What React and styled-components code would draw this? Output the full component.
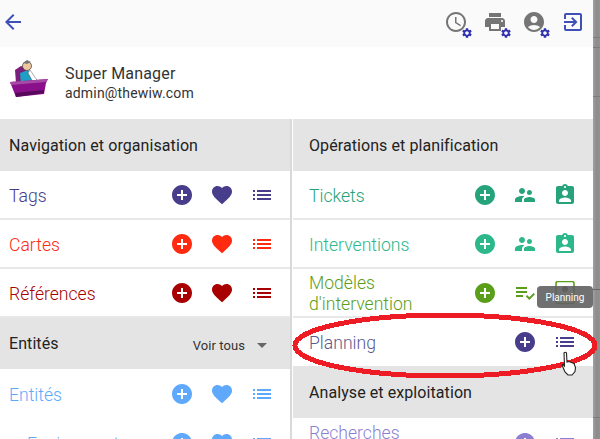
import React from 'react';
import styled, { createGlobalStyle } from 'styled-components';
import {
  MdArrowBack,
  MdAccessTime,
  MdPrint,
  MdAccountCircle,
  MdExitToApp,
  MdSettings,
  MdAddCircle,
  MdFavorite,
  MdList,
  MdSupervisorAccount,
  MdAssignmentInd,
  MdPlaylistAddCheck,
  MdArrowDropDown,
} from 'react-icons/md';

const GlobalStyle = createGlobalStyle`
  html, body {
    margin: 0;
    padding: 0;
    width: 600px;
    height: 439px;
    overflow: hidden;
    background: #fff;
  }
`;

const Page = styled.div`
  position: relative;
  width: 600px;
  height: 439px;
  overflow: hidden;
  background: #fff;
  font-family: Roboto, 'Liberation Sans', sans-serif;
`;

const TopBar = styled.div`
  box-sizing: border-box;
  height: 47px;
  background: #fafafa;
  display: flex;
  align-items: center;
  justify-content: space-between;
  padding: 0 15px 3px 1px;
  color: #3f4fb8;
`;

const TopActions = styled.div`
  display: flex;
  align-items: center;
  gap: 15px;
`;

const GearIcon = styled.span`
  position: relative;
  display: block;
  width: 24px;
  height: 24px;
  color: #757575;

  & > svg:last-child {
    position: absolute;
    right: -5px;
    bottom: -5px;
    color: #2f2fb0;
  }
`;

const User = styled.div`
  height: 72px;
  display: flex;
  align-items: center;
  gap: 15px;
  padding: 0 0 0 10px;
  color: #333;
`;

const AvatarBox = styled.div`
  width: 40px;
  height: 42px;
  margin-bottom: 8px;
`;

const UserInfo = styled.div`
  display: flex;
  flex-direction: column;
  gap: 2px;
`;

const UserName = styled.div`
  font-size: 16px;
  letter-spacing: 0.17px;
  line-height: 19px;
`;

const UserMail = styled.div`
  font-size: 14px;
  letter-spacing: 0.18px;
  line-height: 17px;
`;

const Columns = styled.div`
  display: grid;
  grid-template-columns: 290px 2px 1px 300px;
`;

const Column = styled.div`
  background: #fff;
  height: 320px;
`;

const Divider = styled.div`
  background: #d9d9d9;
`;

const SectionHead = styled.div`
  height: ${(props) => props.$height || 52}px;
  background: #e4e4e4;
  display: flex;
  align-items: center;
  justify-content: space-between;
  padding: 0 16px 0 ${(props) => props.$left || 9}px;
  font-size: 16px;
  letter-spacing: 0.08px;
  color: #222;
`;

const SeeAll = styled.div`
  display: flex;
  align-items: center;
  gap: 5px;
  font-size: 13px;
  color: #333;
  padding-top: 3px;

  svg {
    color: #666;
  }
`;

const Row = styled.div`
  height: ${(props) => props.$height || 49}px;
  box-sizing: border-box;
  border-bottom: ${(props) => (props.$plain ? 'none' : '2px solid #e8e8e8')};
  display: flex;
  align-items: center;
  justify-content: space-between;
  padding: 0 16px 0 ${(props) => props.$left || 9}px;
  color: ${(props) => props.$color};
`;

const RowLabel = styled.div`
  font-size: 17.6px;
  font-weight: 300;
  line-height: 21px;
  padding-left: ${(props) => props.$indent || 0}px;
  padding-top: 3px;
  color: ${(props) => props.$color || 'inherit'};
`;

const RowIcons = styled.div`
  display: flex;
  align-items: center;
  gap: 16px;
`;

const Tooltip = styled.div`
  position: absolute;
  left: 537px;
  top: 286px;
  width: 56px;
  height: 22px;
  border-radius: 4px;
  background: rgba(97, 97, 97, 0.9);
  color: #fff;
  font-size: 10px;
  display: flex;
  align-items: center;
  justify-content: center;
`;

const Edge = styled.div`
  position: absolute;
  top: 0;
  right: 0;
  width: 7px;
  height: 439px;
  background:
    linear-gradient(
      to bottom,
      transparent 37px,
      #7c7c7c 37px,
      #7c7c7c 38px,
      transparent 38px,
      transparent 47px,
      #7c7c7c 47px,
      #7c7c7c 48px,
      transparent 48px,
      transparent 96px,
      #7c7c7c 96px,
      #7c7c7c 97px,
      transparent 97px,
      transparent 289px,
      #666 289px,
      #666 290px,
      transparent 290px,
      transparent 417px,
      #7c7c7c 417px,
      #7c7c7c 418px,
      transparent 418px
    ),
    linear-gradient(to right, #a0a0a0, #8c8c8c 50%, #919191);
`;

const Mark = styled.svg`
  position: absolute;
  left: 290px;
  top: 300px;
  pointer-events: none;
`;

const Pointer = styled.svg`
  position: absolute;
  left: 559px;
  top: 351px;
`;

const Avatar = () => (
  <AvatarBox>
    <svg width="40" height="42" viewBox="0 0 40 42">
      <path d="M5 12l6-4 5 2 1 14-11 1z" fill="#7a1f7a" />
      <path d="M10 15l8-3 6 9-3 4-10 1z" fill="#1f9fc4" />
      <circle cx="17" cy="8" r="4.500" fill="#f0c8a0" stroke="#333" strokeWidth="0.7" />
      <path d="M13 5l4-3 4 2-4 2z" fill="#777" />
      <path d="M20 12l7 10-4 2-5-9z" fill="#fff" stroke="#333" strokeWidth="0.4" />
      <path d="M0 24l38-3-2 4-2 11-28 3-4-10z" fill="#8a0f8a" />
      <path d="M0 24l38-3-2 3-35 3z" fill="#a64aa6" />
      <path d="M5 35l29-3v3l-28 4z" fill="#56085a" />
    </svg>
  </AvatarBox>
);

const WithGear = ({ icon: Icon }) => (
  <GearIcon>
    <Icon size={24} />
    <MdSettings size={12} />
  </GearIcon>
);

// the box in the template row, mostly hidden by the tooltip
const OutlineClipboard = ({ size }) => (
  <svg width={size} height={size} viewBox="0 0 24 24">
    <rect x="3" y="0.500" width="18" height="22" rx="2" fill="none" stroke="currentColor" strokeWidth="1.600" />
    <circle cx="12" cy="8" r="3" fill="#555" />
  </svg>
);

const ItemRow = ({ label, color, labelColor, icons, indent, plain, height, left }) => (
  <Row $color={color} $plain={plain} $height={height} $left={left}>
    <RowLabel $indent={indent} $color={labelColor}>{label}</RowLabel>
    <RowIcons>
      {icons.map((Icon, i) => (
        <Icon key={i} size={24} />
      ))}
    </RowIcons>
  </Row>
);

const fullSet = [MdAddCircle, MdFavorite, MdList];
const ticketSet = [MdAddCircle, MdSupervisorAccount, MdAssignmentInd];

export default function App() {
  return (
    <Page>
      <GlobalStyle />
      <TopBar>
        <MdArrowBack size={24} />
        <TopActions>
          <WithGear icon={MdAccessTime} />
          <WithGear icon={MdPrint} />
          <WithGear icon={MdAccountCircle} />
          <MdExitToApp size={24} />
        </TopActions>
      </TopBar>
      <User>
        <Avatar />
        <UserInfo>
          <UserName>Super Manager</UserName>
          <UserMail>admin@thewiw.com</UserMail>
        </UserInfo>
      </User>
      <Columns>
        <Column>
          <SectionHead>Navigation et organisation</SectionHead>
          <ItemRow label="Tags" color="#483d8b" icons={fullSet} />
          <ItemRow label="Cartes" color="#ff2a10" icons={fullSet} />
          <ItemRow label="Références" color="#a80000" icons={fullSet} />
          <SectionHead $height={51}>
            Entités
            <SeeAll>
              Voir tous
              <MdArrowDropDown size={24} />
            </SeeAll>
          </SectionHead>
          <ItemRow label="Entités" color="#5ea9fb" icons={fullSet} plain />
          <ItemRow label="Equipement" color="#5ea9fb" icons={fullSet} plain indent={18} />
        </Column>
        <Divider />
        <span />
        <Column>
          <SectionHead $left={16}>Opérations et planification</SectionHead>
          <ItemRow label="Tickets" color="#26a37a" icons={ticketSet} left={16} />
          <ItemRow label="Interventions" color="#2cb88a" icons={ticketSet} left={16} />
          <ItemRow
            label={<>Modèles<br />d'intervention</>}
            color="#5a9e1a"
            icons={[MdAddCircle, MdPlaylistAddCheck, OutlineClipboard]}
            left={16}
          />
          <ItemRow
            label="Planning"
            color="#483d8b"
            labelColor="#5a5a8c"
            icons={[MdAddCircle, MdList]}
            height={48}
            plain
            left={16}
          />
          <SectionHead $left={16}>Analyse et exploitation</SectionHead>
          <ItemRow label={<>Recherches<br />enregistrées</>} color="#8b7fd4" icons={[MdAddCircle, MdList]} plain left={16} />
        </Column>
      </Columns>
      <Tooltip>Planning</Tooltip>
      <Edge />
      <Mark width="310" height="90" viewBox="0 0 310 90" shapeRendering="crispEdges">
        <ellipse cx="155" cy="45.500" rx="150" ry="30.500" fill="none" stroke="#ed1c24" strokeWidth="5" />
      </Mark>
      <Pointer width="20" height="26" viewBox="0 0 20 26">
        <path
          d="M5 2c1-1 2-1 2.500 0l.5 9 2-.5 5 2 1.500 4-.5 4-3 3.500H9l-3-3-3-7 1 -.5 1.500 1.500z"
          fill="#fff"
          stroke="#222"
          strokeWidth="1.100"
        />
      </Pointer>
    </Page>
  );
}
